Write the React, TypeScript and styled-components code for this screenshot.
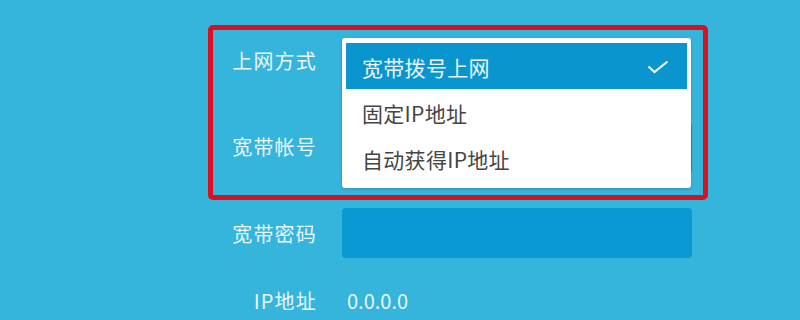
import { createGlobalStyle } from 'styled-components'
import styled from 'styled-components'

const GlobalStyle = createGlobalStyle`
  html, body {
    margin: 0;
    padding: 0;
    background: #35b4dc;
  }
  body {
    font-family: "Noto Sans CJK SC", "Noto Sans", sans-serif;
  }
`

const options = ['宽带拨号上网', '固定IP地址', '自动获得IP地址']

const App: React.FC = () => {
  const selected = 0

  return (
    <Page>
      <GlobalStyle />
      <Form>
        <Highlight>
          <Row $boxed>
            <Label $lift={3}>上网方式</Label>
            <SelectWrap>
              <Menu>
                {options.map((opt, i) => (
                  <MenuItem key={opt} $active={i === selected}>
                    {opt}
                    {i === selected && (
                      <svg width='22' height='14' viewBox='0 0 22 14'>
                        <polyline points='1.5,6.5 7.5,12 20.5,1.5' fill='none' stroke='#e9f6fc' strokeWidth='2.2' />
                      </svg>
                    )}
                  </MenuItem>
                ))}
              </Menu>
            </SelectWrap>
          </Row>
          <Row $boxed $gap={35}>
            <Label $lift={2}>宽带帐号</Label>
            <Input />
          </Row>
        </Highlight>

        <Row $gap={8}>
          <Label>宽带密码</Label>
          <Input />
        </Row>

        <Row $gap={17}>
          <Label>IP地址</Label>
          <Value>0.0.0.0</Value>
        </Row>
      </Form>
    </Page>
  )
}

export default App

const Page = styled.div`
  width: 800px;
  height: 320px;
  overflow: hidden;
  padding: 25px 0 0 208px;
  box-sizing: border-box;
`;

const Form = styled.div`
  display: flex;
  flex-direction: column;
`;

const Highlight = styled.div`
  width: 500px;
  box-sizing: border-box;
  border: 5px solid #d8101f;
  border-radius: 5px;
  padding: 8px 0 22px;
  display: flex;
  flex-direction: column;
`;

const Row = styled.div<{ $boxed?: boolean; $gap?: number }>`
  display: grid;
  grid-template-columns: ${props => props.$boxed ? 104 : 109}px 350px;
  column-gap: 25px;
  align-items: center;
  height: 50px;
  margin-top: ${props => props.$gap ?? 0}px;
`;

const Label = styled.div<{ $lift?: number }>`
  text-align: right;
  color: #eaf7fc;
  font-size: 20px;
  letter-spacing: 1.2px;
  white-space: nowrap;
  margin-bottom: ${props => (props.$lift ?? 0) * 2}px;
`;

const SelectWrap = styled.div`
  position: relative;
  height: 50px;
`;

const Menu = styled.div`
  position: absolute;
  top: 0;
  left: 0;
  width: 349px;
  box-sizing: border-box;
  padding: 5px 4px 7px;
  background: #fff;
  border-radius: 3px;
  box-shadow: 0 1px 3px rgba(0, 0, 0, 0.2);
  z-index: 2;
`;

const MenuItem = styled.div<{ $active?: boolean }>`
  display: flex;
  align-items: center;
  justify-content: space-between;
  height: 46px;
  padding: 1px 18px 0 16px;
  box-sizing: border-box;
  font-size: 21px;
  letter-spacing: 0.3px;
  color: ${props => props.$active ? '#e9f6fc' : '#454545'};
  background: ${props => props.$active ? '#0a95cf' : 'transparent'};
`;

const Input = styled.div`
  height: 50px;
  background: #0a99d3;
  border-radius: 4px;
`;

const Value = styled.div`
  padding-left: 5px;
  color: #eaf7fc;
  font-size: 20px;
`;
